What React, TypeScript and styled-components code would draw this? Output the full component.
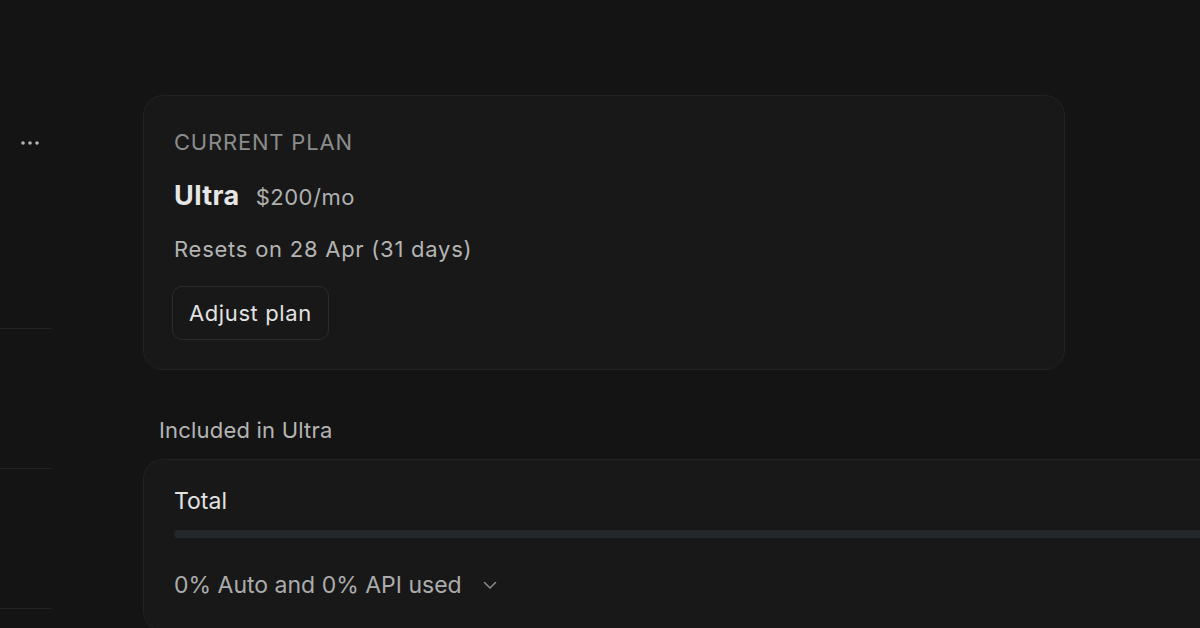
import React from 'react';
import styled, { createGlobalStyle } from 'styled-components';

const GlobalStyle = createGlobalStyle`
  html, body {
    margin: 0;
    padding: 0;
    background-color: #141414;
    overflow: hidden;
  }
  body {
    font-family: Inter, 'Noto Sans', 'Liberation Sans', sans-serif;
    -webkit-font-smoothing: antialiased;
  }
`;

const StyledPage = styled.div`
  display: flex;
  width: 1200px;
  height: 628px;
  background-color: #141414;
  overflow: hidden;
`;

const StyledSidebar = styled.aside`
  flex: 0 0 52px;
  display: flex;
  flex-direction: column;
`;

const StyledSidebarHead = styled.div`
  height: 329px;
  flex-shrink: 0;
  box-sizing: border-box;
  padding: 131px 0 0 20px;
  border-bottom: 1px solid #232323;
`;

const StyledSidebarItem = styled.div`
  height: 140px;
  box-sizing: border-box;
  flex-shrink: 0;
  border-bottom: 1px solid #232323;
`;

const StyledMain = styled.main`
  display: flex;
  flex-direction: column;
  padding: 95px 0 0 91px;
  flex-shrink: 0;
`;

const StyledCard = styled.section<{ $width: number }>`
  width: ${(p) => p.$width}px;
  box-sizing: border-box;
  background-color: #181818;
  border: 1px solid #222222;
  border-radius: 20px;
  padding: 32px 30px 29px;
  display: flex;
  flex-direction: column;
`;

const StyledEyebrow = styled.div`
  font-size: 22px;
  line-height: 28px;
  letter-spacing: 0.8px;
  color: #8c8c8c;
`;

const StyledPlanRow = styled.div`
  display: flex;
  align-items: baseline;
  gap: 16px;
  margin-top: 24px;
  h2 {
    margin: 0;
    font-size: 27px;
    line-height: 32px;
    font-weight: 700;
    letter-spacing: 0.4px;
    color: #e6e6e6;
  }
  span {
    font-size: 22px;
    letter-spacing: 0.5px;
    color: #b0b0b0;
  }
`;

const StyledText = styled.p<{ $size?: number; $color?: string; $track?: number }>`
  margin: 0;
  font-size: ${(p) => p.$size || 22}px;
  line-height: ${(p) => ((p.$size || 22) > 22 ? 30 : 28)}px;
  letter-spacing: ${(p) => p.$track || 0}px;
  color: ${(p) => p.$color || '#b4b4b4'};
`;

const StyledResets = styled(StyledText)`
  margin-top: 23px;
`;

const StyledButton = styled.button`
  align-self: flex-start;
  margin: 23px 0 0 -2px;
  padding: 12px 16px;
  font-family: inherit;
  font-size: 22px;
  line-height: 28px;
  letter-spacing: 0.6px;
  color: #e2e2e2;
  background-color: #181818;
  border: 1px solid #2c2c2c;
  border-radius: 10px;
  cursor: pointer;
`;

const StyledSectionTitle = styled(StyledText)`
  margin: 46px 0 15px 16px;
`;

const StyledUsageCard = styled(StyledCard)`
  padding: 26px 0 30px 30px;
  border-right: none;
  border-top-right-radius: 0;
  border-bottom-right-radius: 0;
`;

const StyledBar = styled.div`
  height: 8px;
  margin-top: 14px;
  border-radius: 4px;
  background-color: #23272b;
`;

const StyledUsageRow = styled.div`
  display: flex;
  align-items: center;
  gap: 21px;
  margin-top: 32px;
  svg {
    margin-top: 1px;
  }
`;

const Dots = () => (
  <svg width="20" height="8" viewBox="0 0 20 8">
    <circle cx="3" cy="4" r="1.8" fill="#b4b4b4" />
    <circle cx="10" cy="4" r="1.8" fill="#b4b4b4" />
    <circle cx="17" cy="4" r="1.8" fill="#b4b4b4" />
  </svg>
);

const Chevron = () => (
  <svg width="14" height="9" viewBox="0 0 14 9" fill="none">
    <path
      d="M1.5 1.5L7 7L12.5 1.5"
      stroke="#8c8c8c"
      strokeWidth="1.5"
      strokeLinecap="round"
      strokeLinejoin="round"
    />
  </svg>
);

function App() {
  return (
    <>
      <GlobalStyle />
      <StyledPage>
        <StyledSidebar>
          <StyledSidebarHead>
            <Dots />
          </StyledSidebarHead>
          <StyledSidebarItem />
          <StyledSidebarItem />
        </StyledSidebar>

        <StyledMain>
          <StyledCard $width={922}>
            <StyledEyebrow>CURRENT PLAN</StyledEyebrow>
            <StyledPlanRow>
              <h2>Ultra</h2>
              <span>$200/mo</span>
            </StyledPlanRow>
            <StyledResets $track={0.75}>Resets on 28 Apr (31 days)</StyledResets>
            <StyledButton>Adjust plan</StyledButton>
          </StyledCard>

          <StyledSectionTitle $track={0.2}>Included in Ultra</StyledSectionTitle>

          <StyledUsageCard $width={1120}>
            <StyledText $size={23} $color="#e2e2e2">
              Total
            </StyledText>
            <StyledBar />
            <StyledUsageRow>
              <StyledText $size={23} $color="#acacac">
                0% Auto and 0% API used
              </StyledText>
              <Chevron />
            </StyledUsageRow>
          </StyledUsageCard>
        </StyledMain>
      </StyledPage>
    </>
  );
}

export default App;
